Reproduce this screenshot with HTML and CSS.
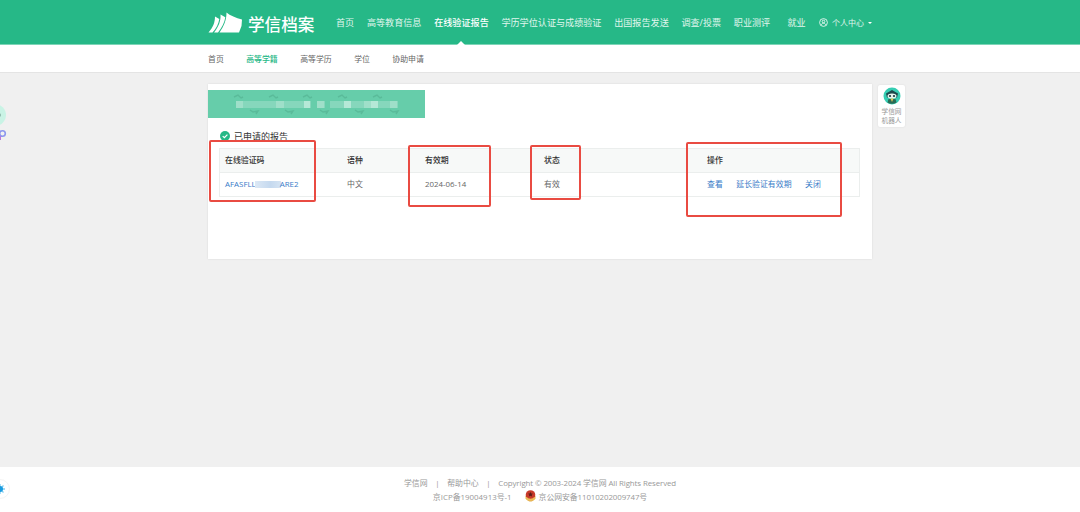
FILE: index.html
```html
<!DOCTYPE html>
<html lang="zh-CN">
<head>
  <meta charset="UTF-8">
  <meta name="viewport" content="width=device-width, initial-scale=1.0">
  <title>学信档案</title>
  <link rel="stylesheet" href="styles.css">
</head>
<body>
  <!-- Header -->
  <header class="header">
    <div class="wrap header_inner">
      <a class="logo">
        <svg class="logo_icon" width="35" height="22" viewBox="0 0 35 22">
          <path fill="#fff" d="M18.500 .5C22 3.500 28 6 34 7.500L33.500 14 31 20.500H11.500C16 14 18.500 8 18.500 .5Z"/>
          <path fill="#fff" d="M12.500 2.500L17.300 5.200C16.500 10.500 14 15.500 10 20.500H6C10.500 15 13 9 12.500 2.500Z"/>
          <path fill="#fff" d="M7 4.500L11.300 7C10.500 11.500 8.500 16.500 4.500 20.500H.5C5 15.500 7 10.500 7 4.500Z"/>
        </svg>
        <span class="logo_text">学信档案</span>
      </a>
      <nav class="nav">
        <a>首页</a>
        <a>高等教育信息</a>
        <a class="active">在线验证报告</a>
        <a>学历学位认证与成绩验证</a>
        <a>出国报告发送</a>
        <a>调查/投票</a>
        <a>职业测评</a>
        <a class="job">就业</a>
      </nav>
      <div class="user">
        <svg width="9" height="9" viewBox="0 0 9 9" fill="none" stroke="#fff" stroke-width=".8">
          <circle cx="4.500" cy="4.500" r="3.900"/>
          <circle cx="4.500" cy="3.500" r="1.300"/>
          <path d="M2.300 6.800C2.700 4.700 6.300 4.700 6.700 6.800"/>
        </svg>
        <span>个人中心</span>
        <i class="caret"></i>
      </div>
    </div>
  </header>

  <!-- Sub navigation -->
  <div class="subnav">
    <div class="wrap subnav_inner">
      <a>首页</a>
      <a class="active">高等学籍</a>
      <a>高等学历</a>
      <a>学位</a>
      <a>协助申请</a>
    </div>
  </div>

  <!-- Content -->
  <main class="wrap card">
    <div class="banner">
      <svg width="217" height="28" viewBox="0 0 217 28">
        <g fill="none" stroke="#5abb9a" stroke-width="1.400">
          <path d="M26 7l4-2 3 3 2-1M61 7l4-2 3 3 2-1M95 7l4-2 3 3 2-1M130 7l4-2 3 3 2-1M165 7l4-2 3 3 2-1"/>
          <path d="M42 20l3 2 5-1-2 3M77 20l3 2 5-1-2 3M112 20l3 2 5-1-2 3M147 20l3 2 5-1-2 3M182 20l3 2 5-1-2 3"/>
        </g>
        <g fill="#86d7bc">
          <path d="M28 11h75v7H28zM109 11h8v7h-8zM122 11h68v7h-68z"/>
        </g>
        <g fill="#9fdfc9">
          <path d="M28 11h7v7h-7zM68 11h8v7h-8zM109 11h7v7h-7zM156 11h8v7h-8zM182 11h7v7h-7z"/>
        </g>
        <g fill="#b5e8d7">
          <path d="M96 11h6v7h-6zM136 11h7v7h-7zM163 11h7v7h-7z"/>
        </g>
      </svg>
    </div>
    <h2 class="title">
      <svg width="10" height="10" viewBox="0 0 10 10">
        <circle cx="5" cy="5" r="5" fill="#25b887"/>
        <path d="M2.700 5.100l1.700 1.600 3-3.100" fill="none" stroke="#fff" stroke-width="1.200"/>
      </svg>
      <span>已申请的报告</span>
    </h2>
    <div class="table">
      <div class="row head">
        <span>在线验证码</span>
        <span>语种</span>
        <span>有效期</span>
        <span>状态</span>
        <span>操作</span>
      </div>
      <div class="row">
        <span class="code">AFASFLL<i class="mask"></i>ARE2</span>
        <span>中文</span>
        <span>2024-06-14</span>
        <span>有效</span>
        <span class="actions"><a>查看</a><a>延长验证有效期</a><a>关闭</a></span>
      </div>
    </div>

    <!-- Highlight frames over the table -->
    <div class="mark mark_code"></div>
    <div class="mark mark_date"></div>
    <div class="mark mark_state"></div>
    <div class="mark mark_actions"></div>

    <aside class="robot">
      <svg width="18" height="18" viewBox="0 0 18 18">
        <circle cx="9" cy="9" r="8.500" fill="#35cdb2"/>
        <path d="M3 6.500L9 3l6 3.500-1 4H4z" fill="#1c4a4c"/>
        <ellipse cx="9" cy="9" rx="4.500" ry="2.600" fill="#e6f5ee"/>
        <circle cx="7" cy="9" r="1.100" fill="#17383b"/>
        <circle cx="11" cy="9" r="1.100" fill="#17383b"/>
        <path d="M5.500 12h7l1 3.500c-2.500 1.800-6.500 1.800-9 0z" fill="#2a6b55"/>
        <path d="M7.500 11.500h3L9 15z" fill="#e2c65a"/>
      </svg>
      <span>学信网</span>
      <span>机器人</span>
    </aside>
  </main>

  <!-- Footer -->
  <footer class="footer">
    <p><a>学信网</a><i>|</i><a>帮助中心</a><i>|</i><span class="copy">Copyright © 2003-2024 学信网 All Rights Reserved</span></p>
    <p>
      <span class="icp">京ICP备19004913号-1</span>
      <svg width="11" height="12" viewBox="0 0 11 12">
        <path d="M.5 6h10c0 3-2 5.500-5 5.500S.5 9 .5 6z" fill="#e2ac4d"/>
        <circle cx="5.500" cy="5" r="4.800" fill="#c73a2a"/>
        <path d="M5.500 2l.8 1.500 1.700.2-1.300 1.100.4 1.700-1.600-.8-1.600.8.400-1.700L3 3.700l1.700-.2z" fill="#5b1d18"/>
        <path d="M1 7.500c1.500 3 7.500 3 9 0" fill="none" stroke="#ecbc58" stroke-width="1.800"/>
      </svg>
      <span class="police">京公网安备11010202009747号</span>
    </p>
  </footer>

  <!-- Floating widgets on the left edge -->
  <svg class="float_top" width="8" height="42" viewBox="0 0 8 42">
    <circle cx="-5" cy="12" r="11" fill="#c9f3e5"/>
    <circle cx="-1" cy="12" r="2" fill="#91b9ac"/>
    <circle cx="2.500" cy="30.500" r="2.800" fill="none" stroke="#8c97ee" stroke-width="1.600"/>
    <path d="M0 33v4" stroke="#b878dc" stroke-width="2"/>
  </svg>
  <svg class="float_bottom" width="11" height="22" viewBox="0 0 11 22">
    <circle cx="0" cy="11" r="9.500" fill="#fff" stroke="#f4f4f4"/>
    <path d="M0 6v10M0 11h5M0 11l3.500-3.500M0 11l3.500 3.500" stroke="#7dcdf0" stroke-width="1.300"/>
    <circle cx="0" cy="11" r="3" fill="#1a9be0"/>
  </svg>
</body>
</html>
```
FILE: styles.css
```css
* {
  box-sizing: border-box;
}
body {
  margin: 0;
  height: 512px;
  display: flex;
  flex-direction: column;
  background-color: #f0f0f0;
  font-family: "Open Sans", "Noto Sans CJK SC", sans-serif;
  font-size: 7.9px;
  color: #666;
  overflow: hidden;
}
i {
  font-style: normal;
}
.wrap {
  width: 664px;
  margin: 0 auto;
}

/* Header */
.header {
  height: 45px;
  background-color: #26b887;
  border-bottom: 1px solid #7dd5b7;
  color: #e0f6ee;
}
.header_inner {
  height: 44px;
  display: flex;
  align-items: center;
  white-space: nowrap;
}
.logo {
  display: flex;
  align-items: center;
  width: 128px;
}
.logo_icon {
  margin-top: 1px;
}
.logo_text {
  margin: 6px 0 0 5px;
  font-size: 16.600px;
  line-height: 20px;
  font-weight: 500;
  color: #fff;
}
.nav {
  display: flex;
  gap: 12.700px;
  font-size: 9.100px;
  line-height: 46px;
  height: 44px;
}
.nav .active {
  position: relative;
  color: #fff;
  font-weight: 500;
}
.nav .active::after {
  content: "";
  position: absolute;
  left: 50%;
  bottom: -1px;
  margin-left: -4px;
  border: 4px solid transparent;
  border-top: 0;
  border-bottom-color: #fff;
}
.nav .job {
  margin-left: 4.500px;
}
.user {
  display: flex;
  align-items: center;
  gap: 4px;
  margin-left: auto;
  padding-top: 1px;
  font-size: 8px;
}
.caret {
  border: 2px solid transparent;
  border-top-color: #fff;
  border-bottom: 0;
}

/* Sub navigation */
.subnav {
  height: 28px;
  background-color: #fff;
  border-bottom: 1px solid #e4e4e4;
}
.subnav_inner {
  display: flex;
  gap: 22.400px;
  line-height: 28px;
}
.subnav .active {
  color: #26b887;
  font-weight: 500;
}

/* Report card */
.card {
  position: relative;
  height: 175px;
  margin-top: 11px;
  padding-top: 6px;
  background-color: #fff;
  box-shadow: 0 0 2px rgba(0, 0, 0, 0.1);
}
.banner {
  width: 217px;
  height: 28px;
  background-color: #66cdaa;
}
.banner svg {
  display: block;
}
.title {
  display: flex;
  align-items: center;
  gap: 4px;
  height: 14px;
  margin: 11px 0 5px 12px;
  font-size: 9px;
  font-weight: 400;
  color: #333;
}
.table {
  width: 641px;
  margin-left: 11px;
  border: 1px solid #ebeeed;
}
.row {
  display: grid;
  grid-template-columns: 122px 78px 119px 163px 1fr;
  height: 23px;
  line-height: 23px;
  padding-left: 5px;
  white-space: nowrap;
}
.row.head {
  height: 24px;
  background-color: #f7f9f8;
  border-bottom: 1px solid #ebeeed;
  color: #333;
  font-weight: 500;
}
.code,
.actions {
  color: #397cc8;
}
.code {
  display: flex;
  align-items: center;
  height: 23px;
}
.mask {
  width: 26px;
  height: 7px;
  margin: 0 -1px;
  background: linear-gradient(90deg, #dce8f5, #c5d9ef 60%, #d5e4f3);
}
.actions {
  display: flex;
  gap: 13.500px;
}

/* Highlight frames */
.mark {
  position: absolute;
  border: 2px solid #e94b42;
  border-radius: 2px;
}
.mark_code {
  left: 1px;
  top: 56px;
  width: 107px;
  height: 62px;
}
.mark_date {
  left: 200px;
  top: 61px;
  width: 83px;
  height: 62px;
}
.mark_state {
  left: 322px;
  top: 61px;
  width: 51px;
  height: 55px;
}
.mark_actions {
  left: 478px;
  top: 58px;
  width: 156px;
  height: 75px;
}

/* Robot helper */
.robot {
  position: absolute;
  left: 670px;
  top: 1px;
  width: 27px;
  height: 42px;
  padding-top: 2px;
  display: flex;
  flex-direction: column;
  align-items: center;
  background-color: #fff;
  border-radius: 2px;
  box-shadow: 0 0 2px rgba(0, 0, 0, 0.1);
  font-size: 6.700px;
  line-height: 9px;
  color: #999;
}
.robot svg {
  margin-bottom: 2px;
}

/* Footer */
.footer {
  height: 45px;
  margin-top: auto;
  padding-top: 9px;
  background-color: #fff;
  color: #999;
}
.footer p {
  display: flex;
  justify-content: center;
  align-items: center;
  height: 13.500px;
  margin: 0;
  white-space: nowrap;
}
.footer i {
  margin: 0 7.600px;
}
.copy {
  letter-spacing: -0.1px;
}
.icp {
  margin-right: 13px;
}
.police {
  margin-left: 3px;
  letter-spacing: -0.1px;
}

/* Floating widgets */
.float_top {
  position: absolute;
  left: 0;
  top: 103px;
}
.float_bottom {
  position: absolute;
  left: 0;
  top: 478px;
}
```
